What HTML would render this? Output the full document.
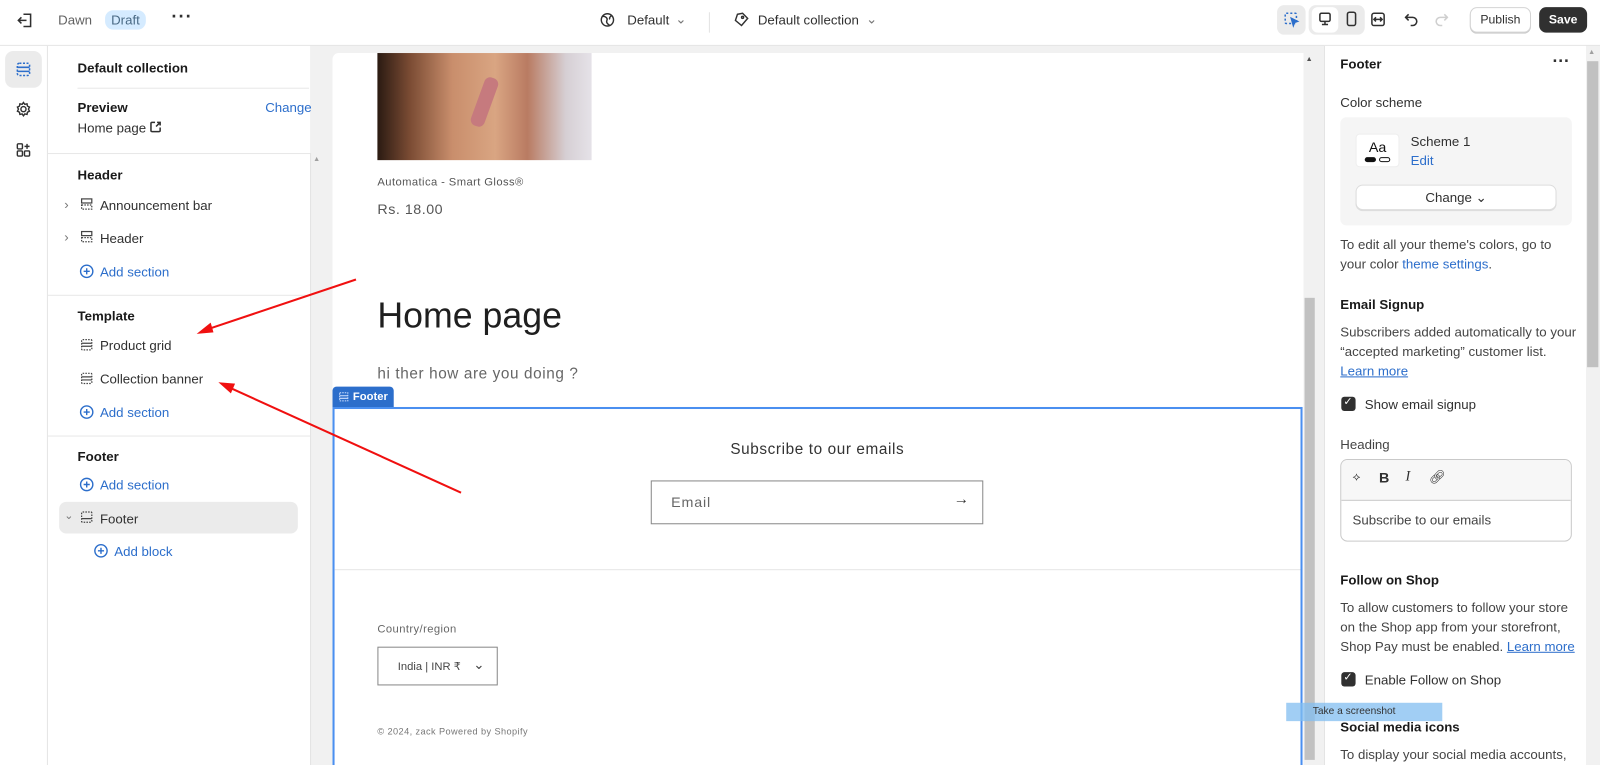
<!DOCTYPE html>
<html><head><meta charset="utf-8"><style>
*{box-sizing:border-box;margin:0;padding:0}
html,body{width:1600px;height:765px;overflow:hidden;background:#fff}
#o{position:absolute;left:0;top:0;width:1600px;height:765px;overflow:hidden;background:#f1f1f1}
#w{position:absolute;left:0;top:0;width:1600px;height:765px;transform:scale(1.02);transform-origin:0 0;font-family:"Liberation Sans",sans-serif;font-size:13px;color:#303030}
.abs{position:absolute}
.top{left:0;top:0;width:1600px;height:45px;background:#fff;border-bottom:1px solid #e3e3e3}
.rail{left:0;top:45px;width:47px;height:720px;background:#fff;border-right:1px solid #e3e3e3}
.lp{left:47px;top:45px;width:257px;height:720px;background:#fff}
.b{font-weight:bold;color:#1a1a1a}
.blue{color:#2c6ecb}
.t{position:absolute;white-space:nowrap}
.hr{position:absolute;height:1px;background:#e8e8e8}
.serif{font-family:"Liberation Sans",sans-serif;color:#555}
</style></head><body><div id="o"><div id="w">
<!-- top bar -->
<div class="abs top">
 <svg class="abs" style="left:16px;top:11px" width="18" height="18" viewBox="0 0 18 18" fill="none" stroke="#303030" stroke-width="1.5"><path d="M7 3h7v12H7"/><path d="M10 9H2M5 6L2 9l3 3"/></svg>
 <div class="t" style="left:57px;top:12px;color:#616161">Dawn</div>
 <div class="t" style="left:103px;top:10px;width:40px;height:19px;border-radius:8px;background:#d5ebff;color:#4a6a85;text-align:center;line-height:19px">Draft</div>
 <div class="t" style="left:168px;top:6px;font-size:18px;font-weight:bold;letter-spacing:1px">···</div>
 <svg class="abs" style="left:588px;top:12px" width="15" height="15" viewBox="0 0 15 15" fill="none" stroke="#303030" stroke-width="1.4"><circle cx="7.5" cy="7.5" r="6"/><path d="M3 4c3 0 5 2 4 4s1 4 3 5M12 3c-2 1-3 3-2 4"/></svg>
 <div class="t" style="left:615px;top:12px">Default</div>
 <div class="t" style="left:662px;top:11px;color:#777">⌄</div>
 <div class="abs" style="left:695px;top:12px;width:1px;height:20px;background:#e3e3e3"></div>
 <svg class="abs" style="left:719px;top:11px" width="16" height="16" viewBox="0 0 16 16" fill="none" stroke="#303030" stroke-width="1.4"><path d="M9 2l5 5-6 7-6-5 2-6z"/><circle cx="9" cy="6" r="1"/></svg>
 <div class="t" style="left:743px;top:12px">Default collection</div>
 <div class="t" style="left:849px;top:11px;color:#777">⌄</div>
 <div class="abs" style="left:1252px;top:5px;width:28px;height:29px;border-radius:7px;background:#ebebeb"></div>
 <svg class="abs" style="left:1259px;top:12px" width="15" height="15" viewBox="0 0 15 15" fill="none" stroke="#2c6ecb" stroke-width="1.5" stroke-dasharray="2 2"><rect x="1" y="1" width="11" height="10" rx="1"/><path d="M7 6l6 3-3 1-1 3z" fill="#2c6ecb" stroke-dasharray="none"/></svg>
 <div class="abs" style="left:1283px;top:5px;width:55px;height:29px;border-radius:7px;background:#ebebeb"></div>
 <div class="abs" style="left:1286px;top:7px;width:26px;height:25px;border-radius:6px;background:#fff"></div>
 <svg class="abs" style="left:1292px;top:12px" width="14" height="14" viewBox="0 0 14 14" fill="none" stroke="#303030" stroke-width="1.5"><rect x="2" y="1" width="10" height="8" rx="1.5"/><path d="M7 9v3M4 12h6"/></svg>
 <svg class="abs" style="left:1318px;top:11px" width="14" height="16" viewBox="0 0 14 16" fill="none" stroke="#303030" stroke-width="1.5"><rect x="3" y="1" width="8" height="13" rx="2"/></svg>
 <svg class="abs" style="left:1343px;top:12px" width="16" height="14" viewBox="0 0 16 14" fill="none" stroke="#303030" stroke-width="1.5"><rect x="2" y="1" width="12" height="12" rx="2"/><path d="M4 7h8M10 5l2 2-2 2M6 5L4 7l2 2"/></svg>
 <svg class="abs" style="left:1377px;top:12px" width="14" height="14" viewBox="0 0 14 14" fill="none" stroke="#303030" stroke-width="1.5"><path d="M4 2L1 5l3 3M1 5h7a4 4 0 010 8H6"/></svg>
 <svg class="abs" style="left:1406px;top:12px" width="14" height="14" viewBox="0 0 14 14" fill="none" stroke="#cfcfcf" stroke-width="1.5"><path d="M10 2l3 3-3 3M13 5H6a4 4 0 000 8h2"/></svg>
 <div class="t" style="left:1441px;top:7px;width:60px;height:25px;border:1px solid #d4d4d4;border-radius:7px;background:#fff;text-align:center;line-height:23px;font-size:12px;box-shadow:0 1px 0 #ccc">Publish</div>
 <div class="t" style="left:1509px;top:7px;width:47px;height:25px;border-radius:7px;background:#303030;color:#fff;text-align:center;line-height:25px;font-size:12px;font-weight:bold">Save</div>
</div>
<!-- rail -->
<div class="abs rail">
 <div class="abs" style="left:5px;top:5px;width:36px;height:36px;border-radius:8px;background:#ebebeb"></div>
 <svg class="abs" style="left:16px;top:16px" width="14" height="14" viewBox="0 0 14 14" fill="none" stroke="#2c6ecb" stroke-width="1.5" stroke-dasharray="2 1.5"><rect x="1" y="1" width="12" height="12" rx="2"/><path d="M1 5h12M1 9h12" stroke-dasharray="none"/></svg>
 <svg class="abs" style="left:15px;top:54px" width="16" height="16" viewBox="0 0 16 16" fill="none" stroke="#303030" stroke-width="1.4"><circle cx="8" cy="8" r="2.5"/><path d="M8 1.5l1.3 1.8 2.2-.5.4 2.2 2 1-1 2 1 2-2 1-.4 2.2-2.2-.5L8 14.5l-1.3-1.8-2.2.5-.4-2.2-2-1 1-2-1-2 2-1 .4-2.2 2.2.5z"/></svg>
 <svg class="abs" style="left:15px;top:94px" width="16" height="16" viewBox="0 0 16 16" fill="none" stroke="#303030" stroke-width="1.4"><rect x="2" y="2" width="5" height="5" rx="1"/><rect x="2" y="9" width="5" height="5" rx="1"/><rect x="9" y="9" width="5" height="5" rx="1"/><path d="M11.5 2v5M9 4.5h5"/></svg>
</div>
<!-- left panel -->
<div class="abs lp">
 <div class="t b" style="left:29px;top:14px">Default collection</div>
 <div class="hr" style="left:29px;top:41px;width:227px"></div>
 <div class="t b" style="left:29px;top:53px">Preview</div>
 <div class="t blue" style="left:213px;top:53px">Change</div>
 <div class="t" style="left:29px;top:73px">Home page</div>
 <svg class="abs" style="left:100px;top:74px" width="11" height="11" viewBox="0 0 11 11" fill="none" stroke="#303030" stroke-width="1.5"><path d="M5 1H2a1 1 0 00-1 1v7a1 1 0 001 1h7a1 1 0 001-1V6M6 5l4-4M7 1h3v3"/></svg>
 <div class="hr" style="left:0;top:105px;width:257px"></div>
 <div class="t b" style="left:29px;top:119px">Header</div>
 <div class="t" style="left:16px;top:148px;color:#777">›</div>
 <div class="t" style="left:16px;top:180px;color:#777">›</div>
 <svg class="abs" style="left:32px;top:149px" width="12" height="12" viewBox="0 0 12 12" fill="none" stroke="#444" stroke-width="1.2"><rect x="1" y="1" width="10" height="4"/><rect x="1" y="7" width="10" height="4" stroke-dasharray="1.5 1.2"/></svg>
 <div class="t" style="left:51px;top:149px">Announcement bar</div>
 <svg class="abs" style="left:32px;top:181px" width="12" height="12" viewBox="0 0 12 12" fill="none" stroke="#444" stroke-width="1.2"><rect x="1" y="1" width="10" height="4"/><rect x="1" y="7" width="10" height="4" stroke-dasharray="1.5 1.2"/></svg>
 <div class="t" style="left:51px;top:181px">Header</div>
 <svg class="abs" style="left:31px;top:214px" width="14" height="14" viewBox="0 0 14 14" fill="none" stroke="#2c6ecb" stroke-width="1.4"><circle cx="7" cy="7" r="6"/><path d="M7 4v6M4 7h6"/></svg>
 <div class="t blue" style="left:51px;top:214px">Add section</div>
 <div class="hr" style="left:0;top:244px;width:257px"></div>
 <div class="t b" style="left:29px;top:257px">Template</div>
 <svg class="abs" style="left:32px;top:287px" width="12" height="12" viewBox="0 0 12 12" fill="none" stroke="#444" stroke-width="1.2"><rect x="1" y="1" width="10" height="10" rx="1" stroke-dasharray="1.5 1.2"/><path d="M1 4.5h10M1 7.5h10"/></svg>
 <div class="t" style="left:51px;top:286px">Product grid</div>
 <svg class="abs" style="left:32px;top:320px" width="12" height="12" viewBox="0 0 12 12" fill="none" stroke="#444" stroke-width="1.2"><rect x="1" y="1" width="10" height="10" rx="1" stroke-dasharray="1.5 1.2"/><path d="M1 4.5h10M1 7.5h10"/></svg>
 <div class="t" style="left:51px;top:319px">Collection banner</div>
 <svg class="abs" style="left:31px;top:352px" width="14" height="14" viewBox="0 0 14 14" fill="none" stroke="#2c6ecb" stroke-width="1.4"><circle cx="7" cy="7" r="6"/><path d="M7 4v6M4 7h6"/></svg>
 <div class="t blue" style="left:51px;top:352px">Add section</div>
 <div class="hr" style="left:0;top:382px;width:257px"></div>
 <div class="t b" style="left:29px;top:395px">Footer</div>
 <svg class="abs" style="left:31px;top:423px" width="14" height="14" viewBox="0 0 14 14" fill="none" stroke="#2c6ecb" stroke-width="1.4"><circle cx="7" cy="7" r="6"/><path d="M7 4v6M4 7h6"/></svg>
 <div class="t blue" style="left:51px;top:423px">Add section</div>
 <div class="abs" style="left:11px;top:447px;width:234px;height:31px;border-radius:7px;background:#ebebeb"></div>
 <div class="t" style="left:16px;top:454px;color:#777;font-size:11px">⌄</div>
 <svg class="abs" style="left:32px;top:456px" width="12" height="12" viewBox="0 0 12 12" fill="none" stroke="#444" stroke-width="1.2"><rect x="1" y="1" width="10" height="10" rx="1" stroke-dasharray="1.5 1.2"/><path d="M1 7.5h10"/></svg>
 <div class="t" style="left:51px;top:456px">Footer</div>
 <svg class="abs" style="left:45px;top:488px" width="14" height="14" viewBox="0 0 14 14" fill="none" stroke="#2c6ecb" stroke-width="1.4"><circle cx="7" cy="7" r="6"/><path d="M7 4v6M4 7h6"/></svg>
 <div class="t blue" style="left:65px;top:488px">Add block</div>
</div>
<div class="abs" style="left:304px;top:150px;width:14px;height:615px;background:#f1f1f1;border-left:1px solid #e3e3e3"></div>
<div class="t" style="left:307px;top:153px;font-size:7px;color:#a0a0a0">▲</div>
<!-- preview -->
<div class="abs" style="left:326px;top:52px;width:952px;height:713px;background:#fff;border-radius:6px 0 0 0"></div>
<div class="abs" style="left:370px;top:52px;width:210px;height:105px;background:linear-gradient(90deg,#2a1a12 0%,#7a4b33 15%,#c98e6c 35%,#d9a582 55%,#b97b62 70%,#d6cfd4 88%,#e5e2e8 100%)"></div>
<div class="abs" style="left:468px;top:75px;width:14px;height:50px;border-radius:6px;background:#c67a7e;transform:rotate(20deg)"></div>
<div class="t serif" style="left:370px;top:173px;font-size:11px;letter-spacing:.4px">Automatica - Smart Gloss®</div>
<div class="t serif" style="left:370px;top:197px;font-size:14px;letter-spacing:.5px">Rs. 18.00</div>
<div class="t" style="left:370px;top:290px;font-size:35px;color:#1f1f1f">Home page</div>
<div class="t serif" style="left:370px;top:358px;font-size:15px;letter-spacing:.6px;color:#666">hi ther how are you doing ?</div>
<div class="abs" style="left:326px;top:399px;width:951px;height:366px;border:2px solid #4a8ff0;border-bottom:none"></div>
<div class="abs" style="left:326px;top:379px;width:60px;height:20px;background:#2c6ecb;border-radius:4px 4px 0 0;color:#fff;font-size:11px;font-weight:bold;line-height:20px;padding-left:20px">Footer</div>
<svg class="abs" style="left:332px;top:384px" width="10" height="10" viewBox="0 0 10 10" fill="none" stroke="#cfe0ff" stroke-width="1"><rect x="1" y="1" width="8" height="8" stroke-dasharray="1.5 1"/><path d="M1 4h8M1 6.5h8"/></svg>
<div class="t serif" style="left:716px;top:432px;font-size:15px;letter-spacing:.6px;color:#333">Subscribe to our emails</div>
<div class="abs" style="left:638px;top:471px;width:326px;height:43px;border:1px solid #888"></div>
<div class="t serif" style="left:658px;top:484px;font-size:14px;letter-spacing:.8px;color:#666">Email</div>
<div class="t" style="left:935px;top:481px;font-size:15px;color:#333">→</div>
<div class="abs" style="left:328px;top:558px;width:947px;height:1px;background:#e6e6e6"></div>
<div class="t serif" style="left:370px;top:611px;font-size:11px;letter-spacing:.4px;color:#666">Country/region</div>
<div class="abs" style="left:370px;top:634px;width:118px;height:38px;border:1px solid #888"></div>
<div class="t serif" style="left:390px;top:647px;font-size:11px;color:#444">India | INR ₹</div>
<div class="t" style="left:464px;top:644px;color:#444">⌄</div>
<div class="t serif" style="left:370px;top:712px;font-size:9px;letter-spacing:.4px;color:#777">© 2024, zack Powered by Shopify</div>
<div class="abs" style="left:1278px;top:52px;width:12px;height:713px;background:#f1f1f1"></div>
<div class="abs" style="left:1279px;top:292px;width:10px;height:453px;background:#c1c1c1"></div>
<div class="t" style="left:1280px;top:55px;font-size:7px;color:#505050">▲</div>
<!-- annotation arrows -->
<svg class="abs" style="left:0;top:0" width="1600" height="765"><g stroke="#f01010" stroke-width="2" fill="#f01010"><line x1="349" y1="274" x2="203" y2="323"/><path d="M196 326l10-8 2 7z"/><line x1="452" y1="483" x2="225" y2="380"/><path d="M217 376l12 1-3 7z"/></g></svg>
<!-- right panel -->
<div class="abs" style="left:1298px;top:45px;width:257px;height:720px;background:#fff;border-left:1px solid #e3e3e3"></div>
<div class="abs" style="left:1555px;top:45px;width:13px;height:720px;background:#f1f1f1"></div>
<div class="abs" style="left:1556px;top:60px;width:11px;height:300px;background:#c1c1c1"></div>
<div class="t" style="left:1557px;top:48px;font-size:7px;color:#a0a0a0">▲</div>
<div class="t b" style="left:1314px;top:55px">Footer</div>
<div class="t" style="left:1522px;top:50px;font-size:17px;font-weight:bold">···</div>
<div class="t" style="left:1314px;top:93px">Color scheme</div>
<div class="abs" style="left:1314px;top:115px;width:227px;height:106px;background:#f5f5f5;border-radius:6px"></div>
<div class="abs" style="left:1329px;top:131px;width:43px;height:33px;background:#fff;border:1px solid #eee;border-radius:4px"></div>
<div class="t" style="left:1342px;top:136px;font-size:14px;color:#111">Aa</div>
<div class="abs" style="left:1338px;top:154px;width:11px;height:5px;border-radius:3px;background:#111"></div>
<div class="abs" style="left:1352px;top:154px;width:11px;height:5px;border-radius:3px;border:1px solid #111"></div>
<div class="t" style="left:1383px;top:131px">Scheme 1</div>
<div class="t blue" style="left:1383px;top:150px">Edit</div>
<div class="t" style="left:1329px;top:181px;width:197px;height:25px;background:#fff;border:1px solid #ddd;border-radius:7px;text-align:center;line-height:23px;box-shadow:0 1px 0 #ddd">Change ⌄</div>
<div class="t" style="left:1314px;top:230px;line-height:19px;color:#444">To edit all your theme's colors, go to<br>your color <span class="blue">theme settings</span>.</div>
<div class="t b" style="left:1314px;top:291px">Email Signup</div>
<div class="t" style="left:1314px;top:316px;line-height:19px;color:#444">Subscribers added automatically to your<br>“accepted marketing” customer list.<br><u class="blue">Learn more</u></div>
<div class="abs" style="left:1315px;top:389px;width:14px;height:14px;border-radius:3px;background:#303030"></div>
<div class="t" style="left:1317px;top:387px;color:#fff;font-size:11px">✓</div>
<div class="t" style="left:1338px;top:389px">Show email signup</div>
<div class="t" style="left:1314px;top:428px;color:#444">Heading</div>
<div class="abs" style="left:1314px;top:450px;width:227px;height:81px;border:1px solid #c9c9c9;border-radius:7px;overflow:hidden"><div style="height:40px;background:#f7f7f7;border-bottom:1px solid #c9c9c9"></div></div>
<div class="t" style="left:1326px;top:460px;font-size:12px">⟡</div>
<div class="t" style="left:1352px;top:460px;font-weight:bold;font-size:14px">B</div>
<div class="t" style="left:1378px;top:460px;font-style:italic;font-size:14px;font-family:'Liberation Serif',serif">I</div>
<div class="t" style="left:1401px;top:460px;font-size:13px">🔗︎</div>
<div class="t" style="left:1326px;top:502px;color:#444">Subscribe to our emails</div>
<div class="t b" style="left:1314px;top:561px">Follow on Shop</div>
<div class="t" style="left:1314px;top:586px;line-height:19px;color:#444">To allow customers to follow your store<br>on the Shop app from your storefront,<br>Shop Pay must be enabled. <u class="blue">Learn more</u></div>
<div class="abs" style="left:1315px;top:659px;width:14px;height:14px;border-radius:3px;background:#303030"></div>
<div class="t" style="left:1317px;top:657px;color:#fff;font-size:11px">✓</div>
<div class="t" style="left:1338px;top:659px">Enable Follow on Shop</div>
<div class="t b" style="left:1314px;top:705px">Social media icons</div>
<div class="t" style="left:1314px;top:732px;color:#444">To display your social media accounts,</div>
<div class="abs" style="left:1261px;top:689px;width:153px;height:18px;background:rgba(130,190,240,.75)"></div>
<div class="t" style="left:1287px;top:692px;font-size:10px;color:#333">Take a screenshot</div>
<div class="abs" style="left:1568px;top:45px;width:40px;height:730px;background:#f1f1f1"></div>
</div></div></body></html>
